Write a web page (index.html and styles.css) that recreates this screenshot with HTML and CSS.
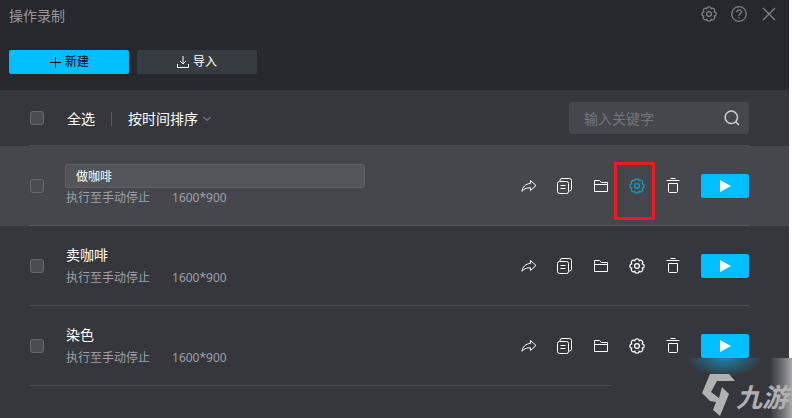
FILE: index.html
```html
<!DOCTYPE html>
<html lang="zh-CN">
<head>
<meta charset="utf-8">
<meta name="viewport" content="width=device-width, initial-scale=1">
<title>操作录制</title>
<link rel="stylesheet" href="styles.css">
</head>
<body>
<svg class="defs" aria-hidden="true">
  <symbol id="gear" viewBox="0 0 16 16"><g stroke-width="1.250"><path d="M13.360 5.780A2.260 2.260 0 0 1 13.360 10.220 2.260 2.260 0 0 1 10.220 13.360 2.260 2.260 0 0 1 5.780 13.360 2.260 2.260 0 0 1 2.640 10.220 2.260 2.260 0 0 1 2.640 5.780 2.260 2.260 0 0 1 5.780 2.640 2.260 2.260 0 0 1 10.220 2.640 2.260 2.260 0 0 1 13.360 5.780Z"/><circle cx="8" cy="8" r="2.400"/></g></symbol>
  <symbol id="share" viewBox="0 0 16 16"><path d="M9.500 2.500 15 7.500 9.500 12.500V9.800C5.500 9.600 3 10.800 1 13.300 1.500 9 4.500 5.700 9.500 5.400Z"/></symbol>
  <symbol id="copy" viewBox="0 0 16 16"><rect x=".5" y="3.500" width="11" height="12" rx="2"/><path d="M3 3V2.500Q3 .5 5 .5H12.500Q14.500.5 14.500 2.500V11Q14.500 13 12.500 13H12M3.500 7.500H8.500M3.500 10.500H8.500"/></symbol>
  <symbol id="folder" viewBox="0 0 16 16"><path d="M1.500 13.500V2.500H6.500L8.500 4.500H14.500V13.500ZM1.500 6.500H14.500"/></symbol>
  <symbol id="trash" viewBox="0 0 16 16"><path d="M5.500.5H10.500M1.500 2.500H14.500M3.500 5.500V13.500Q3.500 14.500 4.500 14.500H11.500Q12.500 14.500 12.500 13.500V5.500Z"/></symbol>
  <symbol id="play" viewBox="0 0 12 12"><path d="M1 0 12 6 1 12Z"/></symbol>
</svg>
<main class="window">
  <header class="header">
    <div class="titlebar">
      <h1 class="title">操作录制</h1>
      <div class="window-tools">
        <button class="icon-button" aria-label="设置"><svg class="icon"><use href="#gear"/></svg></button>
        <button class="icon-button" aria-label="帮助"><svg class="icon" viewBox="0 0 16 16" stroke-width="1.250"><circle cx="8" cy="8" r="7.300"/><path d="M5.700 6.300C5.700 3.300 10.300 3.300 10.300 6.200 10.300 7.800 8 7.800 8 10M8 11V12.300"/></svg></button>
        <button class="icon-button" aria-label="关闭"><svg class="icon" viewBox="0 0 16 16" stroke-width="1.250"><path d="M2 2 14 14M14 2 2 14"/></svg></button>
      </div>
    </div>
    <div class="actions">
      <button class="action primary"><svg class="action-icon" viewBox="0 0 12 12"><path d="M6.500 1V12M1 6.500H12"/></svg>新建</button>
      <button class="action"><svg class="action-icon" viewBox="0 0 12 12"><path d="M6 0V8M3 5 6 8 9 5M.5 8V11.500H11.500V8"/></svg>导入</button>
    </div>
  </header>
  <section class="toolbar">
    <div class="line">
      <input class="check" type="checkbox" id="all">
      <label class="all" for="all">全选</label>
      <button class="sort">按时间排序<svg class="chevron" viewBox="0 0 8 8"><path d="M.5 2 4 5.500 7.500 2"/></svg></button>
      <div class="search">
        <input class="search-input" type="text" placeholder="输入关键字" aria-label="输入关键字">
        <button class="search-button" aria-label="搜索"><svg class="icon" viewBox="0 0 16 16"><circle cx="7.300" cy="7.300" r="6.200"/><path d="M11.700 11.700 15 15"/></svg></button>
      </div>
    </div>
  </section>
  <ul class="list">
    <li class="row active">
      <div class="line">
        <input class="check" type="checkbox" aria-label="选择 做咖啡">
        <div class="info">
          <input class="name-input" type="text" value="做咖啡" aria-label="名称">
          <p class="meta"><span>执行至手动停止</span><span>1600*900</span></p>
        </div>
        <div class="tools">
          <button class="icon-button" aria-label="分享"><svg class="icon"><use href="#share"/></svg></button>
          <button class="icon-button" aria-label="复制"><svg class="icon"><use href="#copy"/></svg></button>
          <button class="icon-button" aria-label="文件夹"><svg class="icon"><use href="#folder"/></svg></button>
          <button class="icon-button current" aria-label="设置"><svg class="icon"><use href="#gear"/></svg></button>
          <button class="icon-button" aria-label="删除"><svg class="icon"><use href="#trash"/></svg></button>
        </div>
        <button class="play" aria-label="执行"><svg class="play-icon"><use href="#play"/></svg></button>
      </div>
    </li>
    <li class="row">
      <div class="line">
        <input class="check" type="checkbox" aria-label="选择 卖咖啡">
        <div class="info">
          <h2 class="name">卖咖啡</h2>
          <p class="meta"><span>执行至手动停止</span><span>1600*900</span></p>
        </div>
        <div class="tools">
          <button class="icon-button" aria-label="分享"><svg class="icon"><use href="#share"/></svg></button>
          <button class="icon-button" aria-label="复制"><svg class="icon"><use href="#copy"/></svg></button>
          <button class="icon-button" aria-label="文件夹"><svg class="icon"><use href="#folder"/></svg></button>
          <button class="icon-button" aria-label="设置"><svg class="icon"><use href="#gear"/></svg></button>
          <button class="icon-button" aria-label="删除"><svg class="icon"><use href="#trash"/></svg></button>
        </div>
        <button class="play" aria-label="执行"><svg class="play-icon"><use href="#play"/></svg></button>
      </div>
    </li>
    <li class="row">
      <div class="line">
        <input class="check" type="checkbox" aria-label="选择 染色">
        <div class="info">
          <h2 class="name">染色</h2>
          <p class="meta"><span>执行至手动停止</span><span>1600*900</span></p>
        </div>
        <div class="tools">
          <button class="icon-button" aria-label="分享"><svg class="icon"><use href="#share"/></svg></button>
          <button class="icon-button" aria-label="复制"><svg class="icon"><use href="#copy"/></svg></button>
          <button class="icon-button" aria-label="文件夹"><svg class="icon"><use href="#folder"/></svg></button>
          <button class="icon-button" aria-label="设置"><svg class="icon"><use href="#gear"/></svg></button>
          <button class="icon-button" aria-label="删除"><svg class="icon"><use href="#trash"/></svg></button>
        </div>
        <button class="play" aria-label="执行"><svg class="play-icon"><use href="#play"/></svg></button>
      </div>
    </li>
  </ul>
</main>
<aside class="watermark">
  <svg class="mark" viewBox="0 0 34 44" aria-hidden="true"><path d="M8 1H27L33 8H15L9 19 17 25 20 14 27 21 18 43 11 37 14 29 8 28 0 20Z"/></svg>
  <span class="brand">九游</span>
</aside>
</body>
</html>
```

FILE: styles.css
```css
* { box-sizing: border-box; }
body {
  margin: 0;
  min-height: 100vh;
  padding-right: 3px;
  background: #fff;
  color: #fff;
  font-family: "Noto Sans", "Noto Sans CJK SC", sans-serif;
  font-size: 14px;
  line-height: 20px;
}
button, input { margin: 0; font: inherit; color: inherit; }
button { padding: 0; border: 0; background: none; cursor: pointer; }
h1, h2, p, ul { margin: 0; padding: 0; font-size: inherit; font-weight: 400; }
.defs { position: absolute; width: 0; height: 0; }
svg { fill: none; stroke: currentColor; }

.window { min-height: 100vh; background: #36373c; }
.header { height: 90px; padding: 0 9px; background: #27282d; }
.titlebar { display: flex; align-items: center; justify-content: space-between; height: 30px; color: #96999c; }
.title { padding-top: 2px; }
.window-tools { display: flex; gap: 14px; padding: 0 3px 2px 0; color: #7f8287; }
.icon-button { display: flex; width: 16px; height: 16px; }
.icon { display: block; width: 16px; height: 16px; }
.actions { display: flex; gap: 8px; padding-top: 20px; }
.action {
  display: flex;
  align-items: center;
  justify-content: center;
  gap: 4px;
  width: 120px;
  height: 24px;
  border-radius: 2px;
  background: #373c40;
  font-size: 12px;
}
.primary { background: #00bfff; color: #000; }
.action-icon { width: 12px; height: 12px; }

.toolbar, .row { padding: 0 40px 0 29px; }
.line { display: flex; align-items: center; border-bottom: 1px solid #4c4d51; }
.toolbar .line { height: 56px; }
.row { list-style: none; }
.row .line { height: 80px; }
.active { background: #46474c; }
.active .line { border-color: #57585c; }
.check {
  appearance: none;
  flex: none;
  width: 14px;
  height: 14px;
  margin: 0 22px 0 1px;
  border: 1px solid #67696d;
  border-radius: 3px;
  background: #4b4c50;
}
.check:checked { background: #00bfff; }
.all { margin-left: 1px; padding: 2px 16px 0 0; }
.sort { display: flex; align-items: center; gap: 5px; padding-top: 2px; }
.sort::before { content: ""; width: 1px; height: 14px; margin-right: 11px; background: #5b5c60; }
.chevron { width: 8px; height: 8px; color: #a5a6a8; }
.search {
  display: flex;
  align-items: center;
  width: 180px;
  height: 32px;
  margin-left: auto;
  padding: 0 9px 0 15px;
  border-radius: 3px;
  background: #46474c;
}
.search-input { flex: 1; min-width: 0; padding: 2px 0 0; border: 0; outline: 0; background: none; }
.search-input::placeholder { color: #73767a; opacity: 1; }
.search-button { color: #d0d0d1; }
.search-button .icon { stroke-width: 1.500; }

.info { flex: 1; min-width: 0; }
.name-input {
  display: block;
  width: 300px;
  max-width: 90%;
  height: 24px;
  margin-left: -1px;
  padding: 0 10px;
  border: 1px solid #5f6064;
  border-radius: 2px;
  outline: 0;
  background: #545559;
  font-size: 12px;
}
.name { padding-top: 1px; margin-bottom: 3px; }
.meta { display: flex; gap: 22px; color: #9ca0a8; font-size: 12px; line-height: 20px; }
.tools { display: flex; gap: 20px; margin-right: 20px; }
.current { position: relative; color: #149dcb; }
.current::after { content: ""; position: absolute; inset: -16px -10px -26px -15px; border: 3px solid #ed1c24; }
.play { display: flex; align-items: center; justify-content: center; width: 48px; height: 24px; border-radius: 2px; background: #00bfff; }
.play-icon { width: 14px; height: 12px; fill: #fff; stroke: none; }

.watermark {
  position: absolute;
  right: 0;
  bottom: 0;
  display: flex;
  align-items: center;
  justify-content: flex-end;
  width: 180px;
  height: 60px;
  padding-right: 4px;
  background:
    linear-gradient(90deg, transparent 158px, #77787b 172px, #aaa 180px),
    radial-gradient(ellipse 38px 18px at 113px 0, #1787ae, transparent),
    #36373c;
  color: #b0b1b3;
}
.mark { width: 34px; height: 44px; margin-top: 14px; fill: currentColor; stroke: none; }
.brand { margin-top: 18px; font-size: 26px; font-weight: 700; font-style: italic; line-height: 40px; }
```
